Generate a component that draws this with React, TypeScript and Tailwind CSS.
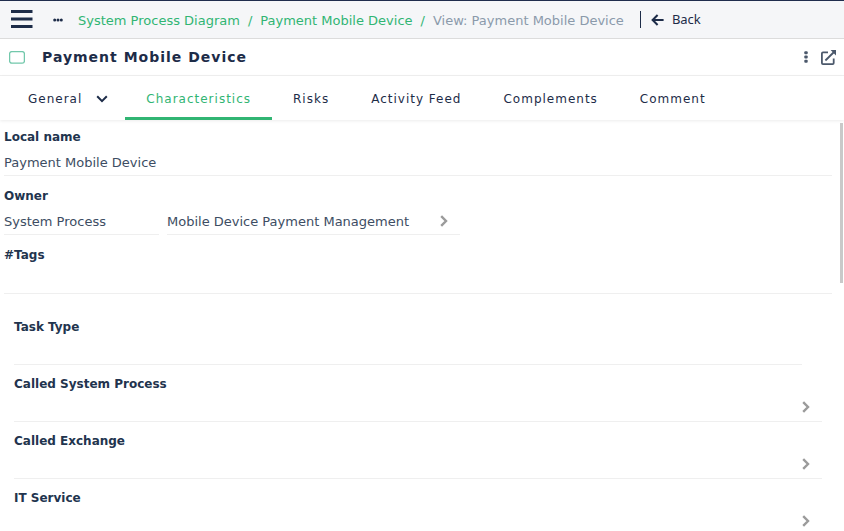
import React, { useId } from "react";

const Chevron = () => (
  <svg width="8" height="12" viewBox="0 0 8 12" fill="none" stroke="#9b9b9b" strokeWidth="2.4" aria-hidden="true">
    <path d="M1.2 1.2 6 6 1.2 10.8" />
  </svg>
);

const inputClass = "h-full w-full min-w-0 bg-transparent text-[13px] text-[#3d4d63] outline-none";
const labelClass = "block h-5 pt-px text-[12px] leading-5 font-bold text-[#22344e]";

function TextField({ label, value = "" }: { label: string; value?: string }) {
  const id = useId();
  return (
    <div className="mb-[9px]">
      <label htmlFor={id} className={labelClass}>{label}</label>
      <div className="mt-[3px] mr-2 h-[27px] border-b border-[#efefef]">
        <input id={id} className={inputClass} defaultValue={value} />
      </div>
    </div>
  );
}

function LinkField({ label, browse = true }: { label: string; browse?: boolean }) {
  const id = useId();
  return (
    <div className="mb-2">
      <label htmlFor={id} className={labelClass}>{label}</label>
      <div className={`flex h-[29px] items-center border-b border-[#efefef] ${browse ? "mr-[18px] pr-3" : "mr-[38px]"}`}>
        <input id={id} className={inputClass} />
        {browse && (
          <button type="button" aria-label={`Open ${label}`} className="shrink-0">
            <Chevron />
          </button>
        )}
      </div>
    </div>
  );
}

function OwnerField() {
  const id = useId();
  return (
    <div className="mb-[9px]">
      <label htmlFor={id} className={labelClass}>Owner</label>
      <div className="mt-[3px] flex h-[27px] gap-2">
        <div className="w-[155px] border-b border-[#efefef]">
          <input id={id} className={inputClass} defaultValue="System Process" />
        </div>
        <div className="flex w-[293px] items-center border-b border-[#efefef] pr-3">
          <input aria-label="Owner name" className={inputClass} defaultValue="Mobile Device Payment Management" />
          <button type="button" aria-label="Open owner" className="shrink-0">
            <Chevron />
          </button>
        </div>
      </div>
    </div>
  );
}

function TopBar() {
  return (
    <header className="flex h-[39px] shrink-0 items-center border-t border-b border-t-[#1f2d4d] border-b-[#dcdcdc] bg-[#f5f6f8] text-[13px] whitespace-nowrap">
      <button type="button" aria-label="Menu" className="ml-[11px]">
        <svg width="22" height="19" viewBox="0 0 22 19" fill="#1d2c48" aria-hidden="true">
          <path d="M0 0h21.5v3H0zM0 7.5h21.5v3H0zM0 15h21.5v3H0z" />
        </svg>
      </button>
      <button type="button" aria-label="More levels" className="ml-5">
        <svg width="10" height="4" viewBox="0 0 10 4" fill="#1d2c48" aria-hidden="true">
          <circle cx="1.7" cy="2" r="1.5" />
          <circle cx="5" cy="2" r="1.5" />
          <circle cx="8.3" cy="2" r="1.5" />
        </svg>
      </button>
      <nav aria-label="Breadcrumb" className="ml-[15px] flex gap-2 pt-[2px] text-[#31b573]">
        <a href="#diagram">System Process Diagram</a>
        <span>/</span>
        <a href="#device">Payment Mobile Device</a>
        <span>/</span>
        <span className="text-[#8b9aab]">View: Payment Mobile Device</span>
      </nav>
      <button type="button" className="ml-4 flex h-[17px] items-center gap-2 border-l border-[#1d2c48] pl-[10px] font-['Noto_Sans',sans-serif] text-[13px] text-[#1d2c48]">
        <svg width="13" height="12" viewBox="0 0 13 12" fill="none" stroke="#1d2c48" strokeWidth="2" aria-hidden="true">
          <path d="M12.6 6H1.6M6.6 1 1.6 6l5 5" />
        </svg>
        Back
      </button>
    </header>
  );
}

function TitleBar() {
  return (
    <div className="flex h-[37px] shrink-0 items-center border-b border-[#f0f0f0] pr-2 pl-[9px]">
      <svg width="16" height="13" viewBox="0 0 16 13" fill="none" stroke="#72c8ab" strokeWidth="1.3" aria-hidden="true">
        <rect x="0.6" y="0.6" width="14.8" height="11.6" rx="2.2" />
      </svg>
      <h1 className="ml-[17px] text-[14px] font-bold tracking-[1px] text-[#1d2c48]">Payment Mobile Device</h1>
      <button type="button" aria-label="More actions" className="ml-auto">
        <svg width="4" height="12" viewBox="0 0 4 12" fill="#4b586b" aria-hidden="true">
          <rect x="0.3" y="0.2" width="3.4" height="3" rx="1" />
          <rect x="0.3" y="4.5" width="3.4" height="3" rx="1" />
          <rect x="0.3" y="8.8" width="3.4" height="3" rx="1" />
        </svg>
      </button>
      <button type="button" aria-label="Open in new window" className="ml-[13px]">
        <svg width="15" height="15" viewBox="0 0 15 15" fill="none" stroke="#4b586b" strokeWidth="1.8" aria-hidden="true">
          <path d="M7 2.4H2Q.9 2.4.9 3.4V13Q.9 14.1 2 14.1H11.6Q12.7 14.1 12.7 13V8.6" />
          <path d="M4.4 10.5 13 2" />
          <path d="M9.6 0H15V5.4Z" fill="#4b586b" stroke="none" />
        </svg>
      </button>
    </div>
  );
}

const tabs = ["General", "Characteristics", "Risks", "Activity Feed", "Complements", "Comment"];

function Tabs() {
  return (
    <div role="tablist" className="flex h-11 shrink-0 pl-[7px] text-[12px] tracking-[1px] whitespace-nowrap text-[#1d2c48] shadow-[0_1px_3px_rgba(0,0,0,0.08)]">
      {tabs.map((tab) => (
        <button
          key={tab}
          type="button"
          role="tab"
          aria-selected={tab === "Characteristics"}
          className="flex items-center gap-[14px] border-b-3 border-transparent px-[21px] pt-[4px] first:pr-[17px] aria-selected:border-[#31b573] aria-selected:text-[#31b573]"
        >
          {tab}
          {tab === "General" && (
            <svg width="12" height="8" viewBox="0 0 12 8" fill="none" stroke="#1d2c48" strokeWidth="2" aria-hidden="true">
              <path d="M1.2 1.3 6 6.1l4.8-4.8" />
            </svg>
          )}
        </button>
      ))}
    </div>
  );
}

export default function App() {
  return (
    <div className="flex h-screen flex-col overflow-hidden bg-white font-[Verdana,'DejaVu_Sans',sans-serif]">
      <TopBar />
      <TitleBar />
      <Tabs />
      <main className="flex min-h-0 flex-1">
        <form className="min-w-0 flex-1 overflow-hidden pt-[6px] pl-1">
          <TextField label="Local name" value="Payment Mobile Device" />
          <OwnerField />
          <TextField label="#Tags" />
          <section className="mt-[22px] ml-[10px]">
            <LinkField label="Task Type" browse={false} />
            <LinkField label="Called System Process" />
            <LinkField label="Called Exchange" />
            <LinkField label="IT Service" />
          </section>
        </form>
        <div className="mt-[3px] mr-px h-[39%] w-[3px] bg-[#c9c9c9]" />
      </main>
    </div>
  );
}
